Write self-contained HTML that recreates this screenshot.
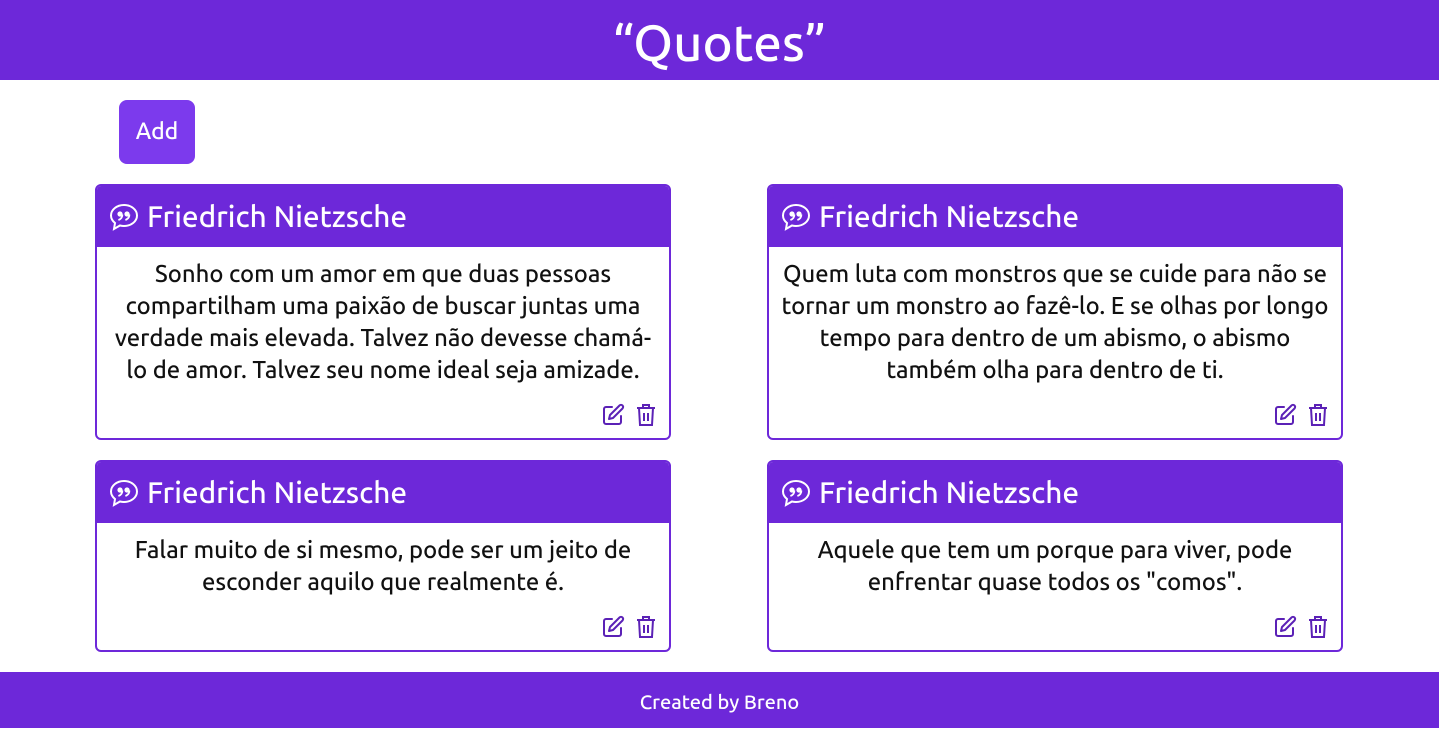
<!DOCTYPE html>
<html><head><meta charset="utf-8"><style>
*{box-sizing:border-box;margin:0;padding:0}
body{width:1439px;height:728px;background:#fff;font-family:"Ubuntu","DejaVu Sans","Liberation Sans",sans-serif;font-weight:500;position:relative;overflow:hidden}
.top{position:absolute;left:0;top:0;width:1439px;height:80px;background:#6d28d9;color:#fff;text-align:center;font-size:51px;line-height:84px}
.add{position:absolute;left:119px;top:100px;width:76px;height:64px;background:#7c3aed;color:#fff;border-radius:8px;font-size:23px;line-height:64px;text-align:center}
.card{position:absolute;width:576px;border:2px solid #6d28d9;border-radius:6px;overflow:hidden}
.hd{height:61px;background:#6d28d9;color:#fff;font-size:29.7px;line-height:61px;padding-left:12px;display:flex;align-items:center;gap:8px}
.bd{text-align:center;font-size:23.8px;line-height:32px;color:#111;padding:11px 10px 0}
.ic{position:absolute;right:12px;bottom:11px;display:flex;gap:10px}
.foot{position:absolute;left:0;top:672px;width:1439px;height:56px;background:#6d28d9;color:#fff;text-align:center;font-size:20px;line-height:60px}
</style></head><body>
<div class="top">“Quotes”</div>
<div class="add">Add</div>

<div class="card" style="left:95px;top:184px;height:256px">
<div class="hd"><svg width="30" height="28" viewBox="0 0 30 28"><path d="M15 2C8 2 2 6.5 2 12.5c0 3 1.5 5.5 4 7.5L5 26l6-3.5c1.3.3 2.6.5 4 .5 7 0 13-4.5 13-10.5S22 2 15 2z" fill="none" stroke="#fff" stroke-width="2"/><circle cx="11" cy="11" r="2.6" fill="#fff"/><path d="M13.4 11.5q0 4-4 5.5" stroke="#fff" stroke-width="1.8" fill="none"/><circle cx="18" cy="11" r="2.6" fill="#fff"/><path d="M20.4 11.5q0 4-4 5.5" stroke="#fff" stroke-width="1.8" fill="none"/></svg>Friedrich Nietzsche</div>
<div class="bd">Sonho com um amor em que duas pessoas compartilham uma paixão de buscar juntas uma verdade mais elevada. Talvez não devesse chamá-lo de amor. Talvez seu nome ideal seja amizade.</div>
<div class="ic"><svg width="24" height="24" viewBox="0 0 24 24" fill="none" stroke="#5b21b6" stroke-width="2" stroke-linecap="round" stroke-linejoin="round"><path d="M11 4H5a2 2 0 0 0-2 2v13a2 2 0 0 0 2 2h13a2 2 0 0 0 2-2v-6"/><path d="M18.5 2.5a2.1 2.1 0 0 1 3 3L12 15l-4 1 1-4z"/></svg><svg width="22" height="24" viewBox="0 0 22 24" fill="none" stroke="#5b21b6" stroke-width="2"><path d="M2 5h18M8 5V2h6v3M4 5l1 17h12l1-17M9 10v8M13 10v8"/></svg></div>
</div>

<div class="card" style="left:767px;top:184px;height:256px">
<div class="hd"><svg width="30" height="28" viewBox="0 0 30 28"><path d="M15 2C8 2 2 6.5 2 12.5c0 3 1.5 5.5 4 7.5L5 26l6-3.5c1.3.3 2.6.5 4 .5 7 0 13-4.5 13-10.5S22 2 15 2z" fill="none" stroke="#fff" stroke-width="2"/><circle cx="11" cy="11" r="2.6" fill="#fff"/><path d="M13.4 11.5q0 4-4 5.5" stroke="#fff" stroke-width="1.8" fill="none"/><circle cx="18" cy="11" r="2.6" fill="#fff"/><path d="M20.4 11.5q0 4-4 5.5" stroke="#fff" stroke-width="1.8" fill="none"/></svg>Friedrich Nietzsche</div>
<div class="bd">Quem luta com monstros que se cuide para não se tornar um monstro ao fazê-lo. E se olhas por longo tempo para dentro de um abismo, o abismo também olha para dentro de ti.</div>
<div class="ic"><svg width="24" height="24" viewBox="0 0 24 24" fill="none" stroke="#5b21b6" stroke-width="2" stroke-linecap="round" stroke-linejoin="round"><path d="M11 4H5a2 2 0 0 0-2 2v13a2 2 0 0 0 2 2h13a2 2 0 0 0 2-2v-6"/><path d="M18.5 2.5a2.1 2.1 0 0 1 3 3L12 15l-4 1 1-4z"/></svg><svg width="22" height="24" viewBox="0 0 22 24" fill="none" stroke="#5b21b6" stroke-width="2"><path d="M2 5h18M8 5V2h6v3M4 5l1 17h12l1-17M9 10v8M13 10v8"/></svg></div>
</div>

<div class="card" style="left:95px;top:460px;height:192px">
<div class="hd"><svg width="30" height="28" viewBox="0 0 30 28"><path d="M15 2C8 2 2 6.5 2 12.5c0 3 1.5 5.5 4 7.5L5 26l6-3.5c1.3.3 2.6.5 4 .5 7 0 13-4.5 13-10.5S22 2 15 2z" fill="none" stroke="#fff" stroke-width="2"/><circle cx="11" cy="11" r="2.6" fill="#fff"/><path d="M13.4 11.5q0 4-4 5.5" stroke="#fff" stroke-width="1.8" fill="none"/><circle cx="18" cy="11" r="2.6" fill="#fff"/><path d="M20.4 11.5q0 4-4 5.5" stroke="#fff" stroke-width="1.8" fill="none"/></svg>Friedrich Nietzsche</div>
<div class="bd">Falar muito de si mesmo, pode ser um jeito de esconder aquilo que realmente é.</div>
<div class="ic"><svg width="24" height="24" viewBox="0 0 24 24" fill="none" stroke="#5b21b6" stroke-width="2" stroke-linecap="round" stroke-linejoin="round"><path d="M11 4H5a2 2 0 0 0-2 2v13a2 2 0 0 0 2 2h13a2 2 0 0 0 2-2v-6"/><path d="M18.5 2.5a2.1 2.1 0 0 1 3 3L12 15l-4 1 1-4z"/></svg><svg width="22" height="24" viewBox="0 0 22 24" fill="none" stroke="#5b21b6" stroke-width="2"><path d="M2 5h18M8 5V2h6v3M4 5l1 17h12l1-17M9 10v8M13 10v8"/></svg></div>
</div>

<div class="card" style="left:767px;top:460px;height:192px">
<div class="hd"><svg width="30" height="28" viewBox="0 0 30 28"><path d="M15 2C8 2 2 6.5 2 12.5c0 3 1.5 5.5 4 7.5L5 26l6-3.5c1.3.3 2.6.5 4 .5 7 0 13-4.5 13-10.5S22 2 15 2z" fill="none" stroke="#fff" stroke-width="2"/><circle cx="11" cy="11" r="2.6" fill="#fff"/><path d="M13.4 11.5q0 4-4 5.5" stroke="#fff" stroke-width="1.8" fill="none"/><circle cx="18" cy="11" r="2.6" fill="#fff"/><path d="M20.4 11.5q0 4-4 5.5" stroke="#fff" stroke-width="1.8" fill="none"/></svg>Friedrich Nietzsche</div>
<div class="bd">Aquele que tem um porque para viver, pode enfrentar quase todos os "comos".</div>
<div class="ic"><svg width="24" height="24" viewBox="0 0 24 24" fill="none" stroke="#5b21b6" stroke-width="2" stroke-linecap="round" stroke-linejoin="round"><path d="M11 4H5a2 2 0 0 0-2 2v13a2 2 0 0 0 2 2h13a2 2 0 0 0 2-2v-6"/><path d="M18.5 2.5a2.1 2.1 0 0 1 3 3L12 15l-4 1 1-4z"/></svg><svg width="22" height="24" viewBox="0 0 22 24" fill="none" stroke="#5b21b6" stroke-width="2"><path d="M2 5h18M8 5V2h6v3M4 5l1 17h12l1-17M9 10v8M13 10v8"/></svg></div>
</div>

<div class="foot">Created by Breno</div>
</body></html>
